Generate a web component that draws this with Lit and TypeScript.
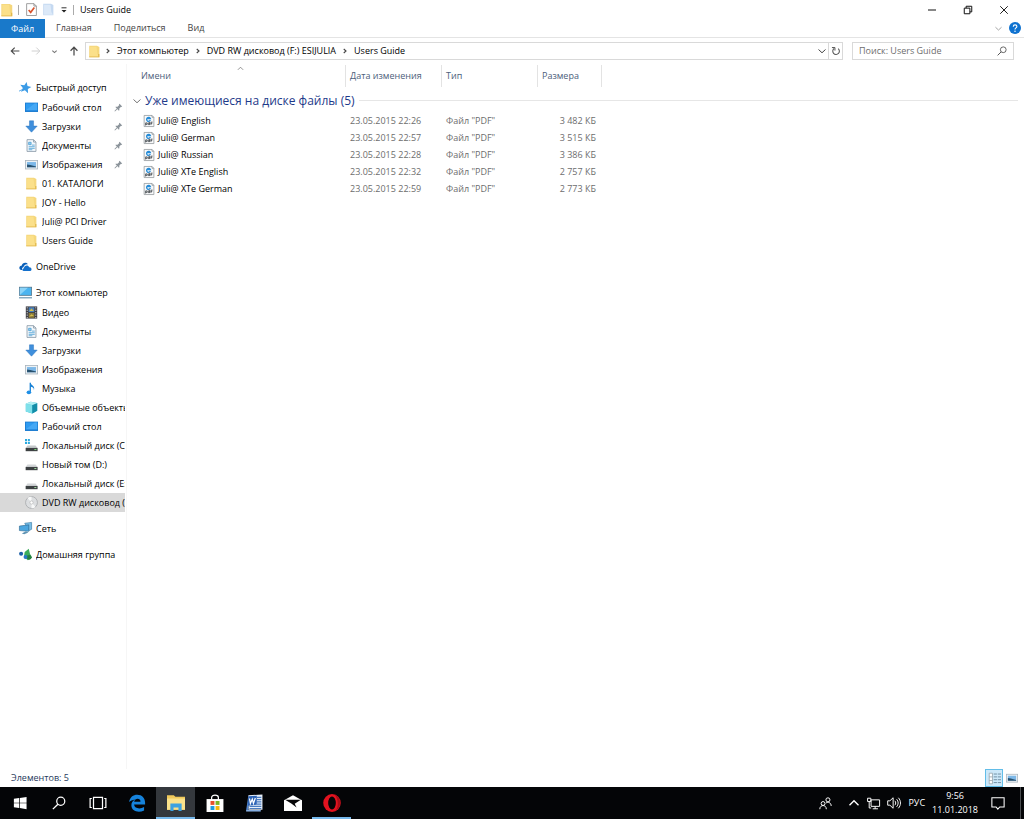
import { LitElement, html, svg, css, nothing, TemplateResult, SVGTemplateResult } from "lit";
import { customElement, property } from "lit/decorators.js";
import { classMap } from "lit/directives/class-map.js";

const ICONS: Record<string, SVGTemplateResult> = {
  star: svg`<path d="M8 1.2l2 4.4 4.900.3-3.700 3.300 1.300 5.100L8 11.600l-4.400 2.700 1.300-5.100L1 5.900l5-.3z" fill="#3b9be6" transform="rotate(12 8 8)"/><path d="M0 12.500l4-2" stroke="#3b9be6"/>`,
  desktop: svg`<rect x="0" y="2" width="16" height="11.500" fill="#1a7bd0"/><rect x="1" y="3" width="14" height="8.500" fill="#2f9bf0"/><path d="M1 11.500L12 3h3v8.500z" fill="#45a8f5"/>`,
  download: svg`<path d="M5.500 1h5v6.500H15L8 15 1 7.500h4.500z" fill="#3f8fdc" stroke="#2b74bd" stroke-width=".6"/>`,
  doc: svg`<path d="M2.500 .8h8l3 3v11.500h-11z" fill="#f4f8fb" stroke="#8798a5"/><path d="M10.500 .8v3h3" fill="none" stroke="#8798a5"/><path d="M4.500 4h3v3h-3zM8.500 7.500H12M4.500 9.500H12M4.500 11.500H12M4.500 13.200H9" stroke="#4b9fd4" fill="#9fd0ef"/>`,
  image: svg`<rect x=".5" y="3" width="15" height="10.500" fill="#eef2f5" stroke="#a9b4bd"/><rect x="2.500" y="5" width="11" height="6.500" fill="#7db8e8"/><path d="M2.500 8l4 .5 7 2v1h-11z" fill="#28516e"/>`,
  folder: svg`<path d="M1.500 1h9.500l3 1.500V15h-12.500z" fill="#f5d77c"/><path d="M2.500 2h8l1 9 2 3.500h-11z" fill="#fbe08a"/><path d="M14 11v4H1.500v-.8h11V11z" fill="#e2b94e"/>`,
  cloud: svg`<path d="M1 11.500C-.5 9 1.500 7 3.200 7.200 4 3.500 8.500 2 11 5.200 8 4.600 5.800 6.500 5.500 9c-1.600.2-2.200 1.800-1.600 3.200C2.500 12.500 1.600 12.300 1 11.500z" fill="#0a5fb8"/><path d="M5.500 13.500c-2-.3-1.800-3.300.6-3.400C6.300 6.500 11.300 5.600 12.500 8.800c3-.4 4.200 3.800 1.300 4.700z" fill="#1470cc"/>`,
  pc: svg`<rect x=".5" y="1.500" width="15" height="10" fill="#4bb4f0" stroke="#55788f"/><path d="M1 11L11 2H1z" fill="#8bd3f8"/><path d="M0 14.500h16" stroke="#6d99b5" stroke-width="1.500"/>`,
  video: svg`<rect x="1" y=".5" width="14" height="15" fill="#3c3c42"/><rect x="4.500" y="1.500" width="7" height="6" fill="#4a7fb8"/><rect x="4.500" y="8.500" width="7" height="6" fill="#8c7b3b"/><path d="M5 6l3-3 3 3zM5 13l3-3 3 2z" fill="#d3bd4d"/><path d="M2.700 1.500v14M13.300 1.500v14" stroke="#d8d8dc" stroke-width="1.200" stroke-dasharray="1.500 1.500"/>`,
  music: svg`<path d="M6.500 1v11" stroke="#1681d6" stroke-width="1.600"/><path d="M6.500 .5c.5 3.500 6.500 4 4.500 9.500.2-3-2-4-4.500-4.500z" fill="#1681d6"/><ellipse cx="4.800" cy="12.700" rx="2.800" ry="2.300" fill="#1f8fe6"/>`,
  cube: svg`<path d="M1 3.500L7 1l8 1.500v9.500l-6 3.500-8-2.500z" fill="#35b8cf"/><path d="M1 3.500l8 1.500v10.500l-8-2.500z" fill="#7fe0ea"/><path d="M9 5l6-2.500v9.500l-6 3.500z" fill="#138da8"/><path d="M1 3.500L7 1l8 1.500L9 5z" fill="#b4f0f4"/>`,
  winDrive: svg`<path d="M0 0h2.500v2.500H0zM3.500 0H6v2.500H3.500zM0 3.500h2.500V6H0zM3.500 3.500H6V6H3.500z" fill="#29a9df"/><path d="M3 8h10l2.500 3H.8z" fill="#c4c8ca"/><rect x=".8" y="11" width="14.700" height="4" fill="#3d4143"/><rect x="11.500" y="12.400" width="2.500" height="1.200" fill="#7ee07e"/>`,
  drive: svg`<path d="M3 8h10l2.500 3H.8z" fill="#d3d6d8"/><rect x=".8" y="11" width="14.700" height="4" fill="#3d4143"/><rect x="11.500" y="12.400" width="2.500" height="1.200" fill="#a4e0a4"/>`,
  disc: svg`<circle cx="8" cy="8" r="7.300" fill="#dcdee0" stroke="#9b9ea0" stroke-width=".8"/><path d="M8 8L3 2.600A7 7 0 0 1 8 1zM8 8l5 5.400A7 7 0 0 1 8 15z" fill="#f7f8f8"/><circle cx="8" cy="8" r="2" fill="#fff" stroke="#aaa" stroke-width=".7"/>`,
  network: svg`<path d="M7 1.500l8.500-1v8.500l-3 1.500z" fill="#79bfe8" stroke="#2e6f9c" stroke-width=".7"/><path d="M.5 5l11.500-1.500v8l-11.500-1z" fill="#4ba6df" stroke="#265f88" stroke-width=".7"/><path d="M3.500 14l5-2.500 3 1.500-5 2z" fill="#5f93b3"/>`,
  home: svg`<circle cx="2.600" cy="7" r="2.500" fill="#1b5fa8"/><path d="M7 5l5-4 1.500 6 2.500 5-5 3-5-4z" fill="#3cac5b"/><circle cx="12.500" cy="11.500" r="3" fill="#237f42"/><circle cx="8" cy="11" r="2.400" fill="#2678c8"/>`,
  pin: svg`<g transform="rotate(45 8 8)" fill="#8c949b"><path d="M5 1.500h6v1.500h-1v4l2 2v1H4V9l2-2V3H5z"/><path d="M7.400 10h1.200v5.500H7.400z"/></g>`,
  pdf: svg`<path d="M1.500 .6h10.500l2.500 2.500v12.300h-13z" fill="#f8f9fa" stroke="#8d9498"/><path d="M12 .6v2.500h2.500" fill="none" stroke="#8d9498"/><path d="M9.800 6.800A2.600 2.600 0 1 1 9.800 4.800H4.800" fill="none" stroke="#258cd8" stroke-width="1.700"/><path d="M3.500 14v-3.500h2V12.500h-2M7 10.500h2V12.800H7zM9 9v3.800M10.800 13v-3.500h2M10.800 11.200h1.500" fill="none" stroke="#41484c" stroke-width="1.100"/>`,
  check: svg`<path d="M2 .8h9l3 3v11.600H2z" fill="#fff" stroke="#8b8b8b"/><path d="M11 .8v3h3" fill="none" stroke="#8b8b8b"/><path d="M4.500 8.500l2.500 3 4.500-6" fill="none" stroke="#d9532c" stroke-width="2"/>`,
  newFolder: svg`<path d="M1.500 1h9.500l3 1.500V15h-12.500z" fill="#c5d9f1"/><path d="M2.500 2h8l1 9 2 3.500h-11z" fill="#dce9f8"/>`,
  caret: svg`<path d="M4 4.500h8" stroke="#222" stroke-width="1.500"/><path d="M4 8h8l-4 4z" fill="#222"/>`,
  back: svg`<path d="M15 8H2M7.500 2.500L2 8l5.500 5.500" fill="none" stroke="#4a4a4a" stroke-width="1.800"/>`,
  forward: svg`<path d="M1 8h13M8.500 2.500L14 8l-5.500 5.500" fill="none" stroke="#d0d0d0" stroke-width="1.600"/>`,
  up: svg`<path d="M8 15V2M2.500 7.500L8 2l5.500 5.500" fill="none" stroke="#4a4a4a" stroke-width="2"/>`,
  smallDown: svg`<path d="M3 6l5 4.500L13 6" fill="none" stroke="currentColor" stroke-width="2.600"/>`,
  down: svg`<path d="M1 5l7 6.500L15 5" fill="none" stroke="currentColor" stroke-width="2"/>`,
  right: svg`<path d="M5.500 4l4.500 4-4.500 4" fill="none" stroke="currentColor" stroke-width="2.200"/>`,
  top: svg`<path d="M2 11l6-6 6 6" fill="none" stroke="currentColor" stroke-width="1.800"/>`,
  refresh: svg`<path d="M11.500 4.200A5.300 5.300 0 1 1 5 4" fill="none" stroke="#555" stroke-width="1.700"/><path d="M1.500 2.500h4.800v4.800" fill="none" stroke="#555" stroke-width="1.600"/>`,
  search: svg`<circle cx="10" cy="6" r="4.600" fill="none" stroke="currentColor" stroke-width="1.400"/><path d="M6.700 9.300L1 15" stroke="currentColor" stroke-width="1.600"/>`,
  minimize: svg`<path d="M0 8h16" stroke="#111" stroke-width="2"/>`,
  restore: svg`<path d="M2 5h9v9H2zM5 5V2h9v9h-3" fill="none" stroke="#111" stroke-width="1.600"/>`,
  close: svg`<path d="M2 2l12 12M14 2L2 14" stroke="#111" stroke-width="1.500"/>`,
  help: svg`<circle cx="8" cy="8" r="8" fill="#0f72d0"/><path d="M5.700 6.200c0-3.200 4.800-3 4.800-.2C10.500 8 8 7.800 8 10" fill="none" stroke="#fff" stroke-width="1.500"/><circle cx="8" cy="12.200" r="1" fill="#fff"/>`,
  details: svg`<path d="M1.500 1.500h4v13h-4zM1.500 6h4M1.500 10.500h4" fill="#fff" stroke="#9aa6ae"/><path d="M7 2.500h4M12 2.500h4M7 6h4M12 6h4M7 9.500h4M12 9.500h4M7 13h4M12 13h4" stroke="#5f7e92"/>`,
  windows: svg`<path d="M1 3.200l6-.9v5.400H1zM7.800 2.200L15.500 1v6.700H7.800zM1 8.400h6v5.400l-6-.9zM7.800 8.400h7.700V15l-7.700-1.200z" fill="#fff"/>`,
  taskview: svg`<path d="M4 3h8v10H4zM2.500 4H1v8h1.500M13.500 4H15v8h-1.500" fill="none" stroke="#fff" stroke-width="1.100"/>`,
  edge: svg`<path d="M1 7.200C1.500 2.800 4.700.6 8.200.6c4.300 0 7 3 7 7.200v1.600H5.400c.3 3.800 5.600 4.200 8.900 2.200v3C9.500 17 3 15.500 3 10c0-2.700 1.400-4.300 3.300-5.200C3.800 5.100 2 6.100 1 7.200zm4.500-.4h5.600c.1-3.600-5.200-3.300-5.600 0z" fill="#1683dc"/>`,
  explorer: svg`<path d="M0 1h6l1.500 1.500H16V14H0z" fill="#f0c95b"/><path d="M0 4h16v10H0z" fill="#fbe28b"/><path d="M3 15V8.500h10V15h-2.800v-3H5.800v3z" fill="#3da2e0"/>`,
  store: svg`<path d="M5 5V3c0-2.600 6-2.600 6 0v2" fill="none" stroke="#fff" stroke-width="1.100"/><path d="M.5 4.500h15V16H.5z" fill="#fff"/><path d="M4 6.200h3.500v3.500H4z" fill="#e8502b"/><path d="M8.500 6.200H12v3.500H8.500z" fill="#7cb526"/><path d="M4 10.700h3.500v3.500H4z" fill="#1d9be0"/><path d="M8.500 10.700H12v3.500H8.500z" fill="#f6b70d"/>`,
  word: svg`<path d="M3 1L15.500 .5v13.500H3z" fill="#e7effa"/><path d="M10.500 3h4M10.500 5h4M10.500 7h4M10.500 9h4M4 11h10.500M4 12.800h10.500" stroke="#4a7cc0" stroke-width=".9"/><path d="M3 1L1 14.500 3 14z" fill="#4f83cc"/><path d="M3 2l7.500-.5v8L2.500 10.500z" fill="#2b62b5"/><path d="M4 4l.8 4.500L6.500 4.500l1 3.800L9.200 3.500" fill="none" stroke="#fff" stroke-width="1.100"/><path d="M1 14.200h13v1.400H1z" fill="#86aee0"/>`,
  mail: svg`<path d="M0 5.500L8 1l8 4.500V15H0z" fill="#fff"/><path d="M1 5.200h14L9.500 8.600l1.700 3.400L6.500 8.500z" fill="#050507"/>`,
  opera: svg`<ellipse cx="8" cy="8" rx="7.800" ry="8" fill="#e3121f"/><ellipse cx="8" cy="8" rx="3.400" ry="5.700" fill="#050507"/><path d="M10 .4c6 1.200 7.500 11 1 14.700 3-3 3-11-1-14.700z" fill="#a80d17"/>`,
  people: svg`<g fill="none" stroke="#fff" stroke-width="1.200"><circle cx="5" cy="8" r="2.400"/><path d="M1 15c0-6 8-6 8 0"/><circle cx="11" cy="3.500" r="2.500"/><path d="M8.500 7.500c3-2.500 6.500 0 6.500 3.500"/></g>`,
  lan: svg`<g fill="none" stroke="#fff" stroke-width="1.200"><path d="M5 3.500h10.500v8H5zM10 11.500v3M7 14.500h6.500"/><path d="M.7 1.500h4v4h-4zM2.700 5.500v8h2.500"/></g>`,
  sound: svg`<g fill="none" stroke="#fff" stroke-width="1.100"><path d="M.8 5.500h2.500L7 2v12l-3.700-3.500H.8z"/><path d="M9 5.500c1.300 1.500 1.300 3.500 0 5M11 3.700c2.300 2.500 2.300 6 0 8.600M13 2c3.200 3.500 3.200 8.500 0 12"/></g>`,
  bell: svg`<path d="M1 2h14v10.500h-5L7.800 15l-2-2.500H1z" fill="none" stroke="#fff" stroke-width="1.200"/>`,
};

const icon = (name: string, size = "s13"): TemplateResult =>
  html`<svg class="icon ${size}" viewBox="0 0 16 16" aria-hidden="true">${ICONS[name]}</svg>`;

const shared = css`
  * { box-sizing: border-box; }
  .icon { display: block; flex: none; overflow: visible; }
  .s7 { width: 7px; height: 7px; }
  .s8 { width: 8px; height: 8px; }
  .s10 { width: 10px; height: 10px; }
  .s12 { width: 12px; height: 12px; }
  .s13 { width: 13px; height: 13px; }
  .s14 { width: 14px; height: 14px; }
  .s18 { width: 18px; height: 18px; }
  button { font: inherit; color: inherit; background: none; border: 0; padding: 0; margin: 0; display: flex; align-items: center; justify-content: center; }
  a { color: inherit; text-decoration: none; }
  ul { list-style: none; margin: 0; padding: 0; }
`;

interface NavItem { icon: string; label: string; pinned?: boolean; selected?: boolean; children?: NavItem[]; }

const NAV: NavItem[] = [
  { icon: "star", label: "Быстрый доступ", children: [
    { icon: "desktop", label: "Рабочий стол", pinned: true },
    { icon: "download", label: "Загрузки", pinned: true },
    { icon: "doc", label: "Документы", pinned: true },
    { icon: "image", label: "Изображения", pinned: true },
    { icon: "folder", label: "01. КАТАЛОГИ" },
    { icon: "folder", label: "JOY - Hello" },
    { icon: "folder", label: "Juli@ PCI Driver" },
    { icon: "folder", label: "Users Guide" },
  ] },
  { icon: "cloud", label: "OneDrive" },
  { icon: "pc", label: "Этот компьютер", children: [
    { icon: "video", label: "Видео" },
    { icon: "doc", label: "Документы" },
    { icon: "download", label: "Загрузки" },
    { icon: "image", label: "Изображения" },
    { icon: "music", label: "Музыка" },
    { icon: "cube", label: "Объемные объекты" },
    { icon: "desktop", label: "Рабочий стол" },
    { icon: "winDrive", label: "Локальный диск (C:)" },
    { icon: "drive", label: "Новый том (D:)" },
    { icon: "drive", label: "Локальный диск (E:)" },
    { icon: "disc", label: "DVD RW дисковод (F:)", selected: true },
  ] },
  { icon: "network", label: "Сеть" },
  { icon: "home", label: "Домашняя группа" },
];

const FILES = [
  ["Juli@ English", "23.05.2015 22:26", "3 482 КБ"],
  ["Juli@ German", "23.05.2015 22:57", "3 515 КБ"],
  ["Juli@ Russian", "23.05.2015 22:28", "3 386 КБ"],
  ["Juli@ XTe English", "23.05.2015 22:32", "2 757 КБ"],
  ["Juli@ XTe German", "23.05.2015 22:59", "2 773 КБ"],
];

@customElement("nav-tree")
export class NavTree extends LitElement {
  @property({ attribute: false }) items: NavItem[] = [];

  static styles = [shared, css`
    :host { display: block; overflow: hidden; padding-top: 14px; border-right: 1px solid #f6f6f6; }
    .roots { display: flex; flex-direction: column; gap: 7px; }
    .children { padding-top: 1px; }
    .row { display: flex; align-items: center; gap: 4px; height: 19px; padding-left: 19px; white-space: nowrap; overflow: hidden; margin-right: 1px; }
    .children .row { padding-left: 25px; }
    .row.selected { background: #d9d9d9; }
    .label { flex: 1; min-width: 0; overflow: hidden; }
    .pinned { padding-right: 2px; }
  `];

  private row(item: NavItem): TemplateResult {
    return html`<li>
      <a href="#" class=${classMap({ row: true, selected: !!item.selected, pinned: !!item.pinned })}>
        ${icon(item.icon)}<span class="label">${item.label}</span>${item.pinned ? icon("pin", "s10") : nothing}
      </a>
      ${item.children ? html`<ul class="children">${item.children.map((c) => this.row(c))}</ul>` : nothing}
    </li>`;
  }

  render() {
    return html`<nav aria-label="Папки"><ul class="roots">${this.items.map((i) => this.row(i))}</ul></nav>`;
  }
}

@customElement("file-table")
export class FileTable extends LitElement {
  static styles = [shared, css`
    :host { display: block; padding: 1px 6px 0 4px; }
    table { width: 100%; table-layout: fixed; border-collapse: separate; border-spacing: 0; }
    .c-name { width: 215px; }
    .c-mid { width: 96px; }
    .c-size { width: 64px; }
    th, td { padding: 0 6px 0 4px; text-align: left; font-weight: 400; white-space: nowrap; overflow: hidden; }
    thead th { height: 22px; color: #4c607a; border-right: 1px solid #e3e3e3; }
    thead th:last-child { border-right: 0; }
    .sortable { display: grid; grid-template-columns: 1fr auto 1fr; height: 22px; align-items: center; }
    .sortable .arrow { align-self: start; color: #777; }
    thead .first { padding-left: 10px; }
    .group { height: 25px; padding: 2px 0 0 2px; }
    .heading { display: flex; align-items: center; gap: 4px; font-size: 12px; line-height: 16px; color: #1e3a8a; }
    .heading .icon { color: #777; }
    .heading::after { content: ""; flex: 1; height: 1px; background: #e6e6e6; }
    tbody td { height: 17px; line-height: 17px; color: #6d6d6d; }
    tbody .name { padding-left: 12px; color: #000; }
    .file { display: flex; align-items: center; gap: 3px; }
    .size { text-align: right; }
  `];

  render() {
    return html`<table>
      <colgroup><col class="c-name"><col class="c-mid"><col class="c-mid"><col class="c-size"><col></colgroup>
      <thead><tr>
        <th class="first" scope="col" aria-sort="ascending"><div class="sortable"><span>Имени</span><span class="arrow">${icon("top", "s7")}</span></div></th>
        <th scope="col">Дата изменения</th><th scope="col">Тип</th><th scope="col">Размера</th><th></th>
      </tr></thead>
      <tbody>
        <tr><th class="group" colspan="5" scope="rowgroup"><div class="heading">${icon("down", "s8")}Уже имеющиеся на диске файлы (5)</div></th></tr>
        ${FILES.map(([name, date, size]) => html`<tr>
          <td class="name"><a href="#" class="file">${icon("pdf", "s12")}<span>${name}</span></a></td>
          <td>${date}</td><td>Файл "PDF"</td><td class="size">${size}</td><td></td>
        </tr>`)}
      </tbody>
    </table>`;
  }
}

@customElement("task-bar")
export class TaskBar extends LitElement {
  static styles = [shared, css`
    :host { display: flex; justify-content: space-between; height: 32px; background: #040507; color: #fff; }
    .apps, .tray { display: flex; }
    .app { width: 39px; height: 32px; border-bottom: 2px solid transparent; padding-top: 2px; }
    .app.open { border-color: #76b9ed; }
    .app.active { background: #34383d; }
    .tray { align-items: center; gap: 7px; }
    .clock { display: flex; flex-direction: column; align-items: center; line-height: 14px; }
    .people { margin-right: 9px; }
    .bell { margin: 0 8px 0 6px; }
    .peek { align-self: stretch; width: 4px; border-left: 1px solid #4a4d50; }
  `];

  render() {
    const apps: [string, string, string, string][] = [
      ["windows", "s14", "Пуск", ""], ["search", "s14", "Поиск", ""], ["taskview", "s18", "Представление задач", ""],
      ["edge", "s18", "Edge", ""], ["explorer", "s18", "Проводник", "open active"], ["store", "s18", "Магазин", ""],
      ["word", "s18", "Word", ""], ["mail", "s18", "Почта", ""], ["opera", "s18", "Opera", "open"],
    ];
    return html`
      <div class="apps">${apps.map(([i, s, label, state]) => html`<button class="app ${state}" aria-label=${label}>${icon(i, s)}</button>`)}</div>
      <div class="tray">
        <button class="people" aria-label="Люди">${icon("people", "s13")}</button>
        <button aria-label="Скрытые значки">${icon("top", "s12")}</button>
        <button aria-label="Сеть">${icon("lan", "s13")}</button>
        <button aria-label="Громкость">${icon("sound", "s14")}</button>
        <button>РУС</button>
        <button class="clock"><span>9:56</span><span>11.01.2018</span></button>
        <button class="bell" aria-label="Уведомления">${icon("bell", "s14")}</button>
        <span class="peek"></span>
      </div>`;
  }
}

@customElement("app-root")
export class AppRoot extends LitElement {
  static styles = [shared, css`
    :host { display: flex; flex-direction: column; min-height: 100vh; background: #fff; color: #000; font: 9px/14px "Open Sans", "Noto Sans", sans-serif; }
    .title { display: flex; align-items: center; height: 19px; padding-right: 2px; }
    .quick { display: flex; align-items: center; gap: 4px; flex: 1; }
    .quick h1 { margin: 0; font-size: 9px; font-weight: 400; }
    .bar { width: 1px; height: 10px; background: #aaa; margin-right: 2px; }
    .window { width: 36px; height: 18px; }
    .tabs { display: flex; align-items: stretch; height: 19px; border-bottom: 1px solid #e4e4e4; color: #444; }
    .tab { padding: 0 11px; }
    .tab.file { width: 45px; background: #1979ca; color: #fff; margin-bottom: -1px; }
    .end { display: flex; align-items: center; gap: 7px; margin-left: auto; padding-right: 3px; color: #999; }
    .address { display: flex; align-items: center; height: 26px; padding-right: 10px; }
    .arrows { display: flex; align-items: center; justify-content: space-between; width: 85px; padding: 0 6px 0 10px; color: #777; }
    .path { display: flex; align-items: center; gap: 5px; flex: 1; height: 18px; border: 1px solid #d9d9d9; padding-left: 2px; color: #444; }
    .path a { color: #000; }
    .path .drop { margin-left: auto; }
    .path .folder { margin-right: -2px; }
    .refresh { width: 14px; height: 16px; border-left: 1px solid #d9d9d9; margin-left: -3px; }
    .find { display: flex; align-items: center; width: 162px; height: 18px; border: 1px solid #d9d9d9; margin-left: 9px; padding: 0 6px; color: #555; }
    .find input { flex: 1; min-width: 0; border: 0; padding: 0; outline: 0; background: none; font: inherit; color: #666; }
    .find input::placeholder { color: #6d6d6d; opacity: 1; }
    .body { display: grid; grid-template-columns: 127px 1fr; flex: 1; }
    .status { display: flex; align-items: center; justify-content: space-between; height: 18px; padding: 0 6px 0 11px; color: #1e395b; }
    .views { display: flex; align-items: center; gap: 3px; }
    .view { width: 18px; height: 18px; }
    .view.on { background: #cce8f9; border: 1px solid #62bde8; }
    .view.small { width: 12px; }
  `];

  render() {
    return html`
      <header class="title">
        <div class="quick">
          ${icon("folder", "s14")}<span class="bar"></span>
          <button aria-label="Свойства">${icon("check", "s13")}</button>
          <button aria-label="Новая папка">${icon("newFolder", "s13")}</button>
          <button aria-label="Настройка панели">${icon("caret", "s10")}</button>
          <span class="bar"></span><h1>Users Guide</h1>
        </div>
        <button class="window" aria-label="Свернуть">${icon("minimize", "s8")}</button>
        <button class="window" aria-label="Восстановить">${icon("restore", "s10")}</button>
        <button class="window" aria-label="Закрыть">${icon("close", "s10")}</button>
      </header>
      <div class="tabs">
        <button class="tab file">Файл</button><button class="tab">Главная</button><button class="tab">Поделиться</button><button class="tab">Вид</button>
        <div class="end"><button aria-label="Развернуть ленту">${icon("down", "s7")}</button><button aria-label="Справка">${icon("help", "s12")}</button></div>
      </div>
      <div class="address">
        <div class="arrows">
          <button aria-label="Назад">${icon("back", "s10")}</button>
          <button aria-label="Вперед">${icon("forward", "s10")}</button>
          <button aria-label="Последние">${icon("smallDown", "s7")}</button>
          <button aria-label="Вверх">${icon("up", "s10")}</button>
        </div>
        <div class="path">
          <span class="folder">${icon("folder", "s13")}</span>
          ${icon("right", "s8")}<a href="#">Этот компьютер</a>
          ${icon("right", "s8")}<a href="#">DVD RW дисковод (F:) ESIJULIA</a>
          ${icon("right", "s8")}<a href="#">Users Guide</a>
          <button class="drop" aria-label="Журнал">${icon("down", "s8")}</button>
          <button class="refresh" aria-label="Обновить">${icon("refresh", "s10")}</button>
        </div>
        <label class="find"><input type="search" aria-label="Поиск" placeholder="Поиск: Users Guide">${icon("search", "s10")}</label>
      </div>
      <main class="body"><nav-tree .items=${NAV}></nav-tree><file-table></file-table></main>
      <footer class="status">
        <span>Элементов: 5</span>
        <div class="views">
          <button class="view on" aria-label="Таблица">${icon("details", "s13")}</button>
          <button class="view small" aria-label="Крупные значки">${icon("image", "s12")}</button>
        </div>
      </footer>
      <task-bar></task-bar>`;
  }
}
